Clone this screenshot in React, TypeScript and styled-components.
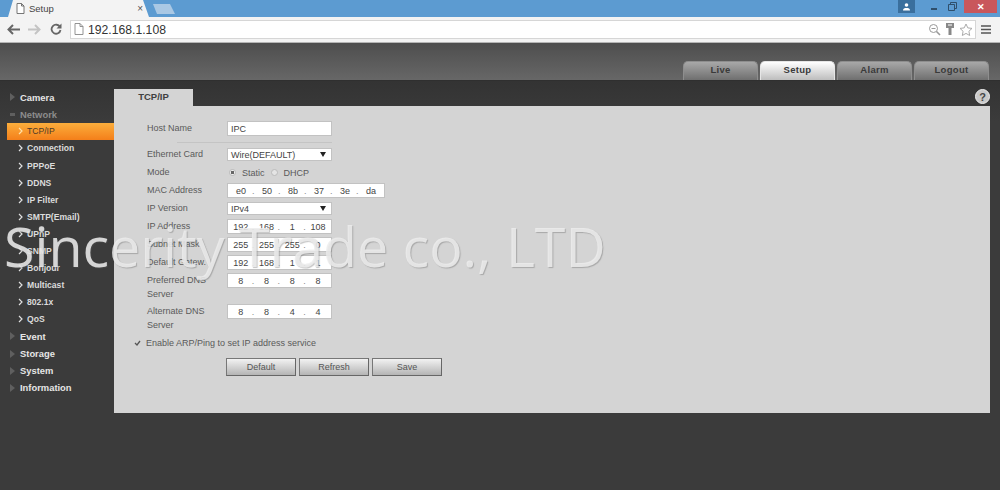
import React from "react";
import { createGlobalStyle, styled } from "styled-components";

const GlobalStyle = createGlobalStyle`
  html, body {
    margin: 0;
    padding: 0;
    background: #3a3a3a;
  }
  * {
    box-sizing: border-box;
  }
`;

const Page = styled.div`
  position: relative;
  width: 1000px;
  height: 490px;
  overflow: hidden;
  display: flex;
  flex-direction: column;
  font-family: "Liberation Sans", Arial, sans-serif;
`;

const TabStrip = styled.div`
  height: 17px;
  background: #5c9bd1;
  display: flex;
  align-items: flex-start;
  justify-content: space-between;
  padding-left: 3px;
`;

const TabGroup = styled.div`
  display: flex;
  align-items: flex-end;
  height: 17px;
`;

const BrowserTab = styled.div`
  width: 152px;
  height: 17px;
  background: #f3f3f3;
  clip-path: polygon(0 100%, 5px 100%, 10px 0, 140px 0, 146px 100%, 152px 100%);
  display: flex;
  align-items: center;
  padding: 0 12px 0 13px;
  gap: 4px;
  color: #444;
  font-size: 9.5px;
`;

const TabTitle = styled.span`
  flex: 1;
`;

const TabClose = styled.span`
  font-size: 10px;
  color: #555;
  line-height: 1;
`;

const NewTab = styled.div`
  width: 22px;
  height: 10px;
  margin: 0 0 3px -2px;
  background: #a9c8e4;
  clip-path: polygon(0 0, 17px 0, 22px 100%, 4px 100%);
`;

const WindowControls = styled.div`
  display: flex;
  align-items: flex-start;
  padding-right: 3px;
`;

const UserBadge = styled.div`
  width: 17px;
  height: 13px;
  background: #3a6f9d;
  display: flex;
  align-items: center;
  justify-content: center;
  margin-right: 9px;
`;

const WindowButton = styled.div`
  width: 19px;
  height: 13px;
  display: flex;
  align-items: center;
  justify-content: center;
`;

const CloseButton = styled.div`
  width: 33px;
  height: 13px;
  margin-left: 2px;
  background: #c9575c;
  color: #fff;
  font-size: 9px;
  font-weight: bold;
  display: flex;
  align-items: center;
  justify-content: center;
`;

const Toolbar = styled.div`
  height: 26px;
  background: #f3f3f3;
  border-bottom: 1px solid #b5b5b5;
  display: flex;
  align-items: center;
  padding: 0 5px 1px 3px;
`;

const NavButton = styled.div`
  width: 21px;
  display: flex;
  justify-content: center;
`;

const AddressBar = styled.div`
  width: 906px;
  height: 19px;
  margin-left: 4px;
  background: #fff;
  border: 1px solid #d6d6d6;
  display: flex;
  align-items: center;
  padding: 0 2px 0 3px;
  color: #333;
  font-size: 12.2px;
  gap: 4px;
`;

const AddressText = styled.span`
  flex: 1;
  padding-top: 1px;
`;

const MenuButton = styled.div`
  flex: 1;
  display: flex;
  justify-content: center;
`;

const Header = styled.div`
  height: 38px;
  background: linear-gradient(#4e4e4e, #676767);
  border-bottom: 1px solid #2f2f2f;
  display: flex;
  align-items: flex-end;
  justify-content: flex-end;
  padding-right: 11px;
  gap: 2px;
`;

const TopTab = styled.div<{ $active?: boolean }>`
  width: 75px;
  height: 19px;
  padding-bottom: 3px;
  border-radius: 5px 5px 0 0;
  border: 1px solid ${(p) => (p.$active ? "#e6e6e6" : "#8e8e8e")};
  border-bottom: none;
  background: ${(p) =>
    p.$active
      ? "linear-gradient(#ffffff, #bdbdbd)"
      : "linear-gradient(#a8a8a8, #6f6f6f)"};
  color: #3a3a3a;
  font-size: 9.5px;
  font-weight: bold;
  display: flex;
  align-items: center;
  justify-content: center;
  letter-spacing: 0.3px;
`;

const Body = styled.div`
  flex: 1;
  display: flex;
  background: linear-gradient(#333333, #3b3b3b 40px);
`;

const Sidebar = styled.nav`
  width: 114px;
  padding: 7.6px 0 0 7px;
  display: flex;
  flex-direction: column;
`;

const MainItem = styled.div<{ $open?: boolean }>`
  height: 17.1px;
  display: flex;
  align-items: center;
  gap: 5px;
  padding-left: 3px;
  color: ${(p) => (p.$open ? "#8c8c8c" : "#e6e6e6")};
  font-size: 9.4px;
  font-weight: bold;
`;

const Arrow = styled.span`
  width: 0;
  height: 0;
  border-left: 5px solid #5f5f5f;
  border-top: 4px solid transparent;
  border-bottom: 4px solid transparent;
`;

const Dash = styled.span`
  width: 5px;
  height: 3px;
  background: #5f5f5f;
`;

const SubItem = styled.div<{ $active?: boolean }>`
  height: 17.1px;
  display: flex;
  align-items: center;
  gap: 4px;
  padding-left: 11px;
  font-size: 8.6px;
  font-weight: ${(p) => (p.$active ? "normal" : "bold")};
  color: ${(p) => (p.$active ? "#4a3a28" : "#dcdcdc")};
  background: ${(p) =>
    p.$active ? "linear-gradient(#fbae3c, #f47f1a)" : "transparent"};
`;

const Chevron = styled.svg`
  flex: none;
`;

const Content = styled.div`
  flex: 1;
  padding: 8px 10px 0 0;
  display: flex;
  flex-direction: column;
`;

const TabRow = styled.div`
  height: 17px;
  display: flex;
  justify-content: space-between;
`;

const PanelTab = styled.div`
  width: 79px;
  height: 17px;
  background: #d4d4d4;
  color: #404040;
  font-size: 9.5px;
  font-weight: bold;
  display: flex;
  align-items: center;
  justify-content: center;
  padding-bottom: 3px;
`;

const HelpIcon = styled.div`
  width: 15px;
  height: 15px;
  border-radius: 50%;
  background: #c9c9c9;
  color: #444;
  border: 1px solid #eee;
  font-size: 11px;
  font-weight: bold;
  display: flex;
  align-items: center;
  justify-content: center;
`;

const Panel = styled.div`
  height: 307px;
  background: #d4d4d4;
  padding: 15px 0 0 33px;
  color: #5a5a5a;
  font-size: 9px;
`;

const Row = styled.div<{ $height?: number }>`
  display: flex;
  align-items: flex-start;
  height: ${(p) => p.$height ?? 18}px;
`;

const Label = styled.div`
  width: 80px;
  line-height: 14px;
`;

const Separator = styled.div`
  width: 155px;
  height: 1px;
  margin: 6px 0 4px 30px;
  background: #c4c4c4;
`;

const TextField = styled.div<{ $width?: number }>`
  width: ${(p) => p.$width ?? 105}px;
  height: 15px;
  background: #fff;
  border: 1px solid #c2c2c2;
  color: #444;
  font-size: 9px;
  display: flex;
  align-items: center;
  padding-left: 3px;
`;

const SelectField = styled(TextField)`
  justify-content: space-between;
  padding-right: 5px;
  height: 13px;
  margin-top: 1px;
`;

const SelectArrow = styled.span`
  width: 0;
  height: 0;
  border-left: 3px solid transparent;
  border-right: 3px solid transparent;
  border-top: 5px solid #222;
`;

const IpField = styled(TextField)`
  padding: 0;
`;

const IpPart = styled.span`
  flex: 1;
  text-align: center;
`;

const IpDot = styled.span`
  width: 0;
  margin-left: -2px;
  margin-right: 2px;
  color: #888;
`;

const RadioGroup = styled.div`
  display: flex;
  align-items: center;
  height: 15px;
  padding-left: 2px;
  gap: 6px;
`;

const Radio = styled.span<{ $on?: boolean }>`
  width: 7px;
  height: 7px;
  border-radius: 50%;
  border: 1px solid #bbb;
  background: ${(p) =>
    p.$on ? "radial-gradient(#666 0 1.5px, #eee 2px)" : "#e4e4e4"};
`;

const CheckRow = styled.div`
  display: flex;
  align-items: center;
  gap: 4px;
  height: 14px;
  margin: 4px 0 0 -14px;
`;

const CheckBox = styled.span`
  width: 9px;
  display: flex;
  justify-content: center;
`;

const ButtonRow = styled.div`
  display: flex;
  gap: 3px;
  margin: 8px 0 0 79px;
`;

const ActionButton = styled.button`
  width: 70px;
  height: 18px;
  padding: 0;
  border: 1px solid #777;
  border-right-color: #666;
  border-bottom-color: #666;
  background: linear-gradient(#f2f2f2, #b4b4b4);
  color: #555;
  font-family: inherit;
  font-size: 9px;
`;

const Watermark = styled.div`
  position: absolute;
  left: 4px;
  top: 213px;
  color: rgba(238, 238, 238, 0.86);
  font-family: "Open Sans", sans-serif;
  font-size: 55.5px;
  line-height: 66px;
  white-space: nowrap;
  text-shadow: 1px 1px 1px rgba(90, 90, 90, 0.35);
  pointer-events: none;
`;

const networkItems = [
  "TCP/IP",
  "Connection",
  "PPPoE",
  "DDNS",
  "IP Filter",
  "SMTP(Email)",
  "UPnP",
  "SNMP",
  "Bonjour",
  "Multicast",
  "802.1x",
  "QoS",
];

const IpInput: React.FC<{ parts: string[]; width?: number }> = ({
  parts,
  width,
}) => (
  <IpField $width={width}>
    {parts.map((part, i) => (
      <React.Fragment key={i}>
        {i > 0 && <IpDot>.</IpDot>}
        <IpPart>{part}</IpPart>
      </React.Fragment>
    ))}
  </IpField>
);

const SubLink: React.FC<{ name: string; active?: boolean }> = ({
  name,
  active,
}) => (
  <SubItem $active={active}>
    <Chevron width="5" height="8" viewBox="0 0 5 8">
      <path
        d="M1 1l3 3-3 3"
        fill="none"
        stroke={active ? "#ffe0a8" : "#e0e0e0"}
        strokeWidth="1.2"
      />
    </Chevron>
    {name}
  </SubItem>
);

const App: React.FC = () => {
  return (
    <Page>
      <GlobalStyle />
      <TabStrip>
        <TabGroup>
          <BrowserTab>
            <svg width="9" height="11" viewBox="0 0 9 11">
              <path
                d="M1 .5h4.5L8 3v7.5H1zM5.5 .5V3H8"
                fill="#fff"
                stroke="#666"
                strokeWidth="0.9"
              />
            </svg>
            <TabTitle>Setup</TabTitle>
            <TabClose>×</TabClose>
          </BrowserTab>
          <NewTab />
        </TabGroup>
        <WindowControls>
          <UserBadge>
            <svg width="9" height="8" viewBox="0 0 9 8">
              <circle cx="4.5" cy="2" r="1.8" fill="#fff" />
              <path d="M1 7.5c0-2 1.5-2.500 3.500-2.500S8 5.500 8 7.500z" fill="#fff" />
            </svg>
          </UserBadge>
          <WindowButton>
            <svg width="8" height="8" viewBox="0 0 8 8">
              <path d="M1 6h6" stroke="#2f4f6b" strokeWidth="2" />
            </svg>
          </WindowButton>
          <WindowButton>
            <svg width="9" height="9" viewBox="0 0 9 9">
              <path
                d="M.5 2.5h6v6h-6zM2.5 2.5v-2h6v6h-2"
                fill="none"
                stroke="#2f4f6b"
              />
            </svg>
          </WindowButton>
          <CloseButton>✕</CloseButton>
        </WindowControls>
      </TabStrip>

      <Toolbar>
        <NavButton>
          <svg width="13" height="11" viewBox="0 0 13 11">
            <path
              d="M6 1L1.5 5.5 6 10M2 5.5h11"
              fill="none"
              stroke="#666"
              strokeWidth="2"
            />
          </svg>
        </NavButton>
        <NavButton>
          <svg width="13" height="11" viewBox="0 0 13 11">
            <path
              d="M7 1l4.5 4.5L7 10M11 5.5H0"
              fill="none"
              stroke="#c4c4c4"
              strokeWidth="2"
            />
          </svg>
        </NavButton>
        <NavButton>
          <svg width="12" height="12" viewBox="0 0 12 12">
            <path
              d="M10 4a4.5 4.5 0 1 0 .5 3"
              fill="none"
              stroke="#666"
              strokeWidth="1.8"
            />
            <path d="M11.5 .5v5h-5z" fill="#666" />
          </svg>
        </NavButton>
        <AddressBar>
          <svg width="10" height="12" viewBox="0 0 10 12">
            <path
              d="M1 .5h5L9 3.5v8H1zM6 .5v3h3"
              fill="#fff"
              stroke="#888"
              strokeWidth="0.9"
            />
          </svg>
          <AddressText>192.168.1.108</AddressText>
          <svg width="13" height="13" viewBox="0 0 13 13">
            <circle cx="5.5" cy="5.5" r="4" fill="none" stroke="#999" />
            <path d="M3.5 5.5h4" stroke="#999" />
            <path d="M8.5 8.5l3.5 3.5" stroke="#999" strokeWidth="1.6" />
          </svg>
          <svg width="10" height="12" viewBox="0 0 10 12">
            <path d="M1 0h8v5H6.5v7h-3V5H1z" fill="#888" />
            <path d="M3 2h4" stroke="#fff" />
          </svg>
          <svg width="14" height="13" viewBox="0 0 14 13">
            <path
              d="M7 1l1.800 3.900 4.200.5-3.100 2.900.8 4.200L7 10.400l-3.700 2.100.8-4.200L1 5.400l4.200-.5z"
              fill="#fff"
              stroke="#aaa"
            />
          </svg>
        </AddressBar>
        <MenuButton>
          <svg width="10" height="9" viewBox="0 0 10 9">
            <path d="M0 1h10M0 4.5h10M0 8h10" stroke="#555" strokeWidth="1.7" />
          </svg>
        </MenuButton>
      </Toolbar>

      <Header>
        <TopTab>Live</TopTab>
        <TopTab $active>Setup</TopTab>
        <TopTab>Alarm</TopTab>
        <TopTab>Logout</TopTab>
      </Header>

      <Body>
        <Sidebar>
          <MainItem>
            <Arrow />
            Camera
          </MainItem>
          <MainItem $open>
            <Dash />
            Network
          </MainItem>
          {networkItems.map((name, i) => (
            <SubLink key={name} name={name} active={i === 0} />
          ))}
          {["Event", "Storage", "System", "Information"].map((name) => (
            <MainItem key={name}>
              <Arrow />
              {name}
            </MainItem>
          ))}
        </Sidebar>

        <Content>
          <TabRow>
            <PanelTab>TCP/IP</PanelTab>
            <HelpIcon>?</HelpIcon>
          </TabRow>
          <Panel>
            <Row $height={15}>
              <Label>Host Name</Label>
              <TextField>IPC</TextField>
            </Row>
            <Separator />
            <Row>
              <Label>Ethernet Card</Label>
              <SelectField>
                Wire(DEFAULT)
                <SelectArrow />
              </SelectField>
            </Row>
            <Row>
              <Label>Mode</Label>
              <RadioGroup>
                <Radio $on />
                <span>Static</span>
                <Radio />
                <span>DHCP</span>
              </RadioGroup>
            </Row>
            <Row>
              <Label>MAC Address</Label>
              <IpInput width={158} parts={["e0", "50", "8b", "37", "3e", "da"]} />
            </Row>
            <Row>
              <Label>IP Version</Label>
              <SelectField>
                IPv4
                <SelectArrow />
              </SelectField>
            </Row>
            <Row>
              <Label>IP Address</Label>
              <IpInput parts={["192", "168", "1", "108"]} />
            </Row>
            <Row>
              <Label>Subnet Mask</Label>
              <IpInput parts={["255", "255", "255", "0"]} />
            </Row>
            <Row>
              <Label>Default Gatew.</Label>
              <IpInput parts={["192", "168", "1", "1"]} />
            </Row>
            <Row $height={31}>
              <Label>
                Preferred DNS
                <br />
                Server
              </Label>
              <IpInput parts={["8", "8", "8", "8"]} />
            </Row>
            <Row $height={28}>
              <Label>
                Alternate DNS
                <br />
                Server
              </Label>
              <IpInput parts={["8", "8", "4", "4"]} />
            </Row>
            <CheckRow>
              <CheckBox>
                <svg width="7" height="6" viewBox="0 0 7 6">
                  <path d="M1 3l2 2 3-4" fill="none" stroke="#555" strokeWidth="1.3" />
                </svg>
              </CheckBox>
              Enable ARP/Ping to set IP address service
            </CheckRow>
            <ButtonRow>
              <ActionButton>Default</ActionButton>
              <ActionButton>Refresh</ActionButton>
              <ActionButton>Save</ActionButton>
            </ButtonRow>
          </Panel>
        </Content>
      </Body>

      <Watermark>Sincerity Trade co., LTD</Watermark>
    </Page>
  );
};

export default App;
